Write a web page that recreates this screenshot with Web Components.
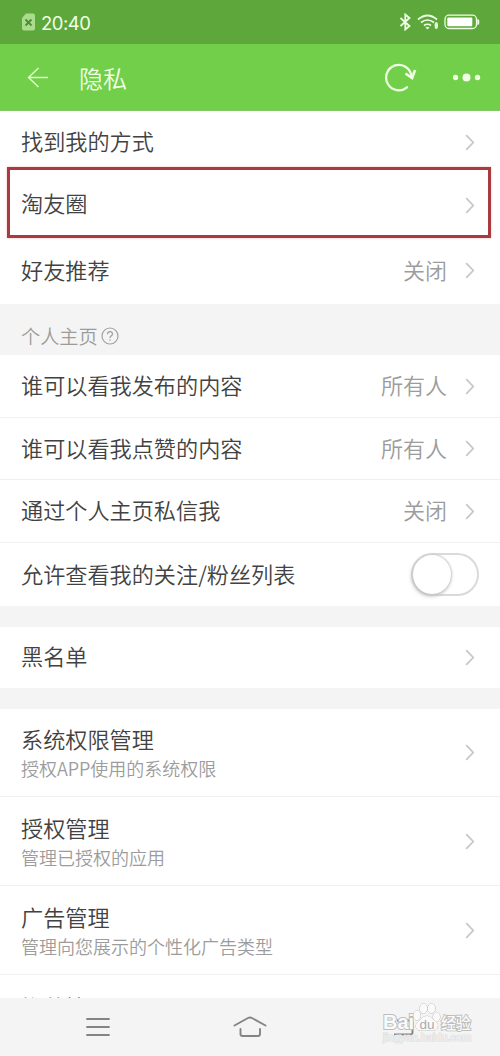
<!DOCTYPE html>
<html lang="zh-CN">
<head>
<meta charset="utf-8">
<title>隐私</title>
<style>
html,body{margin:0;padding:0}
body{width:500px;height:1056px;overflow:hidden;background:#fff;font-family:"Noto Sans CJK SC","Liberation Sans",sans-serif;font-weight:350;color:#424242}
</style>
</head>
<body>
<privacy-app></privacy-app>
<script>
const define = (name, html) => customElements.define(name, class extends HTMLElement {
  constructor() {
    super();
    const t = document.createElement('template');
    t.innerHTML = html;
    this.attachShadow({mode: 'open'}).append(t.content.cloneNode(true));
  }
});

define('status-bar', `
<style>
:host{display:flex;box-sizing:border-box;height:44px;background:#5ea73a;align-items:center;padding:0 16px 0 22px;color:#f0ffe6}
svg{display:block;flex:none}
span{font:400 18.500px/44px Inter,"Noto Sans",sans-serif;letter-spacing:-.5px;margin-left:6px;flex:1;padding-top:2px}
</style>
<svg width="13" height="18" viewBox="0 0 13 18"><path d="M4 .5h7q2 0 2 2v13q0 2-2 2H2q-2 0-2-2V5z" fill="#a9dd8c"/><path d="M3.500 6.500l6 6m0-6l-6 6" stroke="#4f8a38" stroke-width="1.800"/></svg>
<span>20:40</span>
<svg width="84" height="18" viewBox="0 0 84 18" fill="none" stroke="#efffe7">
<path d="M5.500 5l9 8-4.200 3.500V1.500L14.500 5l-9 8" transform="translate(-5 0)" stroke-width="1.800"/>
<path d="M18 6.500q9.500-8 19 0M21 9.500q6.500-5 13 0M24 12.500q3.500-2.500 7 0" stroke-width="1.700"/>
<path d="M25.500 14.500q2-1.500 4 0l-2 2z" fill="#efffe7" stroke="none"/>
<path d="M36.300 9q1.700 0 1.700 2.500v2q0 2.500-1.700 2.500t-1.700-2.500v-2q0-2.500 1.700-2.500z" fill="#dff7d2" stroke="none"/>
<rect x="45" y="2.200" width="31.500" height="13.300" rx="4" stroke-width="1.300"/><rect x="47.300" y="4.500" width="25" height="8.800" rx="1" fill="#fff" stroke="none"/><path d="M77.300 6q2 0 2 3t-2 3z" fill="#efffe7" stroke="none"/>
</svg>`);

define('title-bar', `
<style>
:host{display:flex;box-sizing:border-box;height:67px;background:#72cf4a;border-bottom:1px solid #83c866;align-items:center;padding:0 19px 0 27px;color:#efffe4}
svg{display:block;flex:none}
h1{flex:1;margin:2px 0 0 30px;font-size:24px;line-height:60px;font-weight:350}
.more{margin-left:36px}
</style>
<svg width="22" height="22" viewBox="0 0 22 22" fill="none" stroke="#dcffc8" stroke-width="1.500"><path d="M11.500 2L1.500 11.500l10 9.500M1.500 11.500H21"/></svg>
<h1>隐私</h1>
<svg width="32" height="30" viewBox="0 0 32 30" fill="none" stroke="#efffe4" stroke-width="2.300"><path d="M22 25.300A12.700 12.700 0 1 1 26.300 13" stroke-linecap="round"/><path d="M20.500 11.500l6.600 4.500 3-8" stroke-width="2.600"/></svg>
<svg class="more" width="28" height="12" viewBox="0 0 28 12" fill="#efffe4"><circle cx="2.500" cy="6.500" r="2.700"/><circle cx="13.500" cy="6.500" r="4"/><circle cx="24.500" cy="6.500" r="2.700"/></svg>`);

define('chevron-icon', `
<style>:host{display:block;flex:none;width:10px;height:17px}svg{display:block}</style>
<svg width="10" height="17" viewBox="0 0 10 17" fill="none" stroke="#c8c8c8" stroke-width="1.800"><path d="M1.200 1.200l7 7.300-7 7.300"/></svg>`);

define('toggle-switch', `
<style>
:host{display:block;box-sizing:border-box;width:68px;height:43px;border:2px solid #dadada;border-radius:22px;flex:none;background:#fff}
i{display:block;width:38px;height:39px;border-radius:50%;background:#fff;box-shadow:0 0 2px 1px #ccc,-1px 2px 4px #bbb}
</style><i></i>`);

define('setting-row', `
<style>
:host{display:flex;box-sizing:border-box;height:var(--h,62px);align-items:center;padding:0 25px 0 21px;background:#fff;border-bottom:var(--line,1px) solid #f0f0f0}
:host([switch]){padding-right:21px}
.text{flex:1;display:flex;flex-direction:column;margin-top:var(--shift,-4px)}
.main{font-size:22.150px;line-height:30px;white-space:nowrap}
.value{font-size:22px;line-height:30px;color:#9c9c9c;margin:-4px 18px 0 0}
::slotted([slot=sub]){font-size:18px;line-height:30px;color:#9c9c9c;white-space:nowrap}
</style>
<div class="text"><span class="main"><slot></slot></span><slot name="sub"></slot></div>
<span class="value"><slot name="value"></slot></span>
<slot name="end"><chevron-icon></chevron-icon></slot>`);

define('section-label', `
<style>
:host{display:flex;box-sizing:border-box;height:51px;background:#f4f4f4;align-items:center;padding:13px 21px 0;color:#9c9c9c;font-size:19.200px;line-height:28px}
svg{display:block;margin-left:3px}
</style>
<slot></slot>
<svg width="18" height="18" viewBox="0 0 18 18" fill="none" stroke="#a0a0a0" stroke-width="1.200"><circle cx="9" cy="9" r="8"/><path d="M6.500 7.300q0-2.700 2.500-2.700t2.500 2.300q0 1.300-1.400 2-1.100.7-1.100 2.100M9 12.300v1.500"/></svg>`);

define('group-gap', `<style>:host{display:block;height:21px;background:#f4f4f4}</style>`);

define('brand-mark', `
<style>
:host{display:block;width:92px;height:44px}
svg{display:block;overflow:visible}
</style>
<svg width="92" height="44" viewBox="0 0 92 44" fill="#fafafa" stroke="#bdbdbd" stroke-width="1" paint-order="stroke" font-family="'Liberation Sans','Noto Sans CJK SC',sans-serif">
<text x="2" y="27.500" font-size="20" font-weight="700" stroke-width="2" textLength="31" lengthAdjust="spacingAndGlyphs">Bai</text>
<ellipse cx="36" cy="14.500" rx="3.500" ry="4.700"/><ellipse cx="42.500" cy="7.500" rx="3.700" ry="5"/><ellipse cx="50.500" cy="7.500" rx="3.700" ry="5"/><ellipse cx="55.500" cy="16" rx="3.500" ry="4.700"/>
<path d="M46 15q4 0 6.500 4 5 3 4.300 6.500-.8 4-5.800 4H41q-5.500 0-6.200-4-.5-3.500 4.700-6.500 2.500-4 6.500-4z"/>
<text x="38.500" y="27.500" font-size="13" fill="#aaa" stroke="none" textLength="15" lengthAdjust="spacingAndGlyphs">du</text>
<text x="60" y="27.500" font-size="15.500" font-weight="500" stroke-width="1.800" font-family="'Noto Sans CJK SC',sans-serif" textLength="30">经验</text>
<text x="2" y="39.500" font-size="10.500" fill="#f3f3f3" stroke="#dcdcdc" stroke-width="1.200" textLength="88" lengthAdjust="spacingAndGlyphs">jingyan.baidu.com</text>
</svg>`);

define('nav-bar', `
<style>
:host{display:grid;height:58px;background:#f4f4f4;grid-template-columns:195px 110px 195px;place-items:center;position:relative}
svg{display:block}
brand-mark{position:absolute;left:381px;top:3px}
</style>
<svg width="24" height="20" viewBox="0 0 24 20" stroke="#848484" stroke-width="1.900" stroke-linecap="round"><path d="M1 2h22M1 10h22M1 18h22"/></svg>
<svg width="34" height="22" viewBox="0 0 34 22" fill="none" stroke="#848484" stroke-width="1.900" stroke-linecap="round" stroke-linejoin="round"><path d="M1.500 9.500L15 2q2-1 4 0l13.500 7.500M7.500 13v5q0 2 2 2h15.500q2 0 2-2v-5"/></svg>
<svg width="22" height="22" viewBox="0 0 22 22" fill="none" stroke="#848484" stroke-width="1.900"><path d="M5 4.500h13q2.500 0 2.500 2v10q0 2-2 2H2"/></svg>
<brand-mark></brand-mark>`);

define('highlight-frame', `<style>:host{display:block;box-sizing:border-box;position:absolute;left:7px;top:167px;width:484px;height:71px;border:3.500px solid #a93a40;box-shadow:0 0 2px #f3b5b0}</style>`);

define('privacy-app', `
<style>
:host{display:flex;flex-direction:column;position:relative;width:500px;height:1056px;overflow:hidden}
main{flex:1;min-height:0;overflow:hidden}
nav-bar{flex:none}
.tall{--shift:1px}
</style>
<status-bar></status-bar>
<title-bar></title-bar>
<main>
<setting-row style="--h:63px;--line:0px;--shift:-6px">找到我的方式</setting-row>
<setting-row style="--h:63px;--line:0px;--shift:-7px">淘友圈</setting-row>
<setting-row style="--h:67px;--line:0px">好友推荐<span slot="value">关闭</span></setting-row>
<section-label>个人主页</section-label>
<setting-row style="--h:63px">谁可以看我发布的内容<span slot="value">所有人</span></setting-row>
<setting-row style="--h:62px">谁可以看我点赞的内容<span slot="value">所有人</span></setting-row>
<setting-row style="--h:63px">通过个人主页私信我<span slot="value">关闭</span></setting-row>
<setting-row switch style="--h:63px;--line:0px">允许查看我的关注/粉丝列表<toggle-switch slot="end"></toggle-switch></setting-row>
<group-gap></group-gap>
<setting-row style="--h:61px;--line:0px;--shift:-6px">黑名单</setting-row>
<group-gap></group-gap>
<setting-row class="tall" style="--h:88px">系统权限管理<span slot="sub">授权APP使用的系统权限</span></setting-row>
<setting-row class="tall" style="--h:89px">授权管理<span slot="sub">管理已授权的应用</span></setting-row>
<setting-row class="tall" style="--h:89px">广告管理<span slot="sub">管理向您展示的个性化广告类型</span></setting-row>
<setting-row style="--h:63px;--shift:-1px">推荐管理</setting-row>
</main>
<nav-bar></nav-bar>
<highlight-frame></highlight-frame>`);
</script>
</body>
</html>
